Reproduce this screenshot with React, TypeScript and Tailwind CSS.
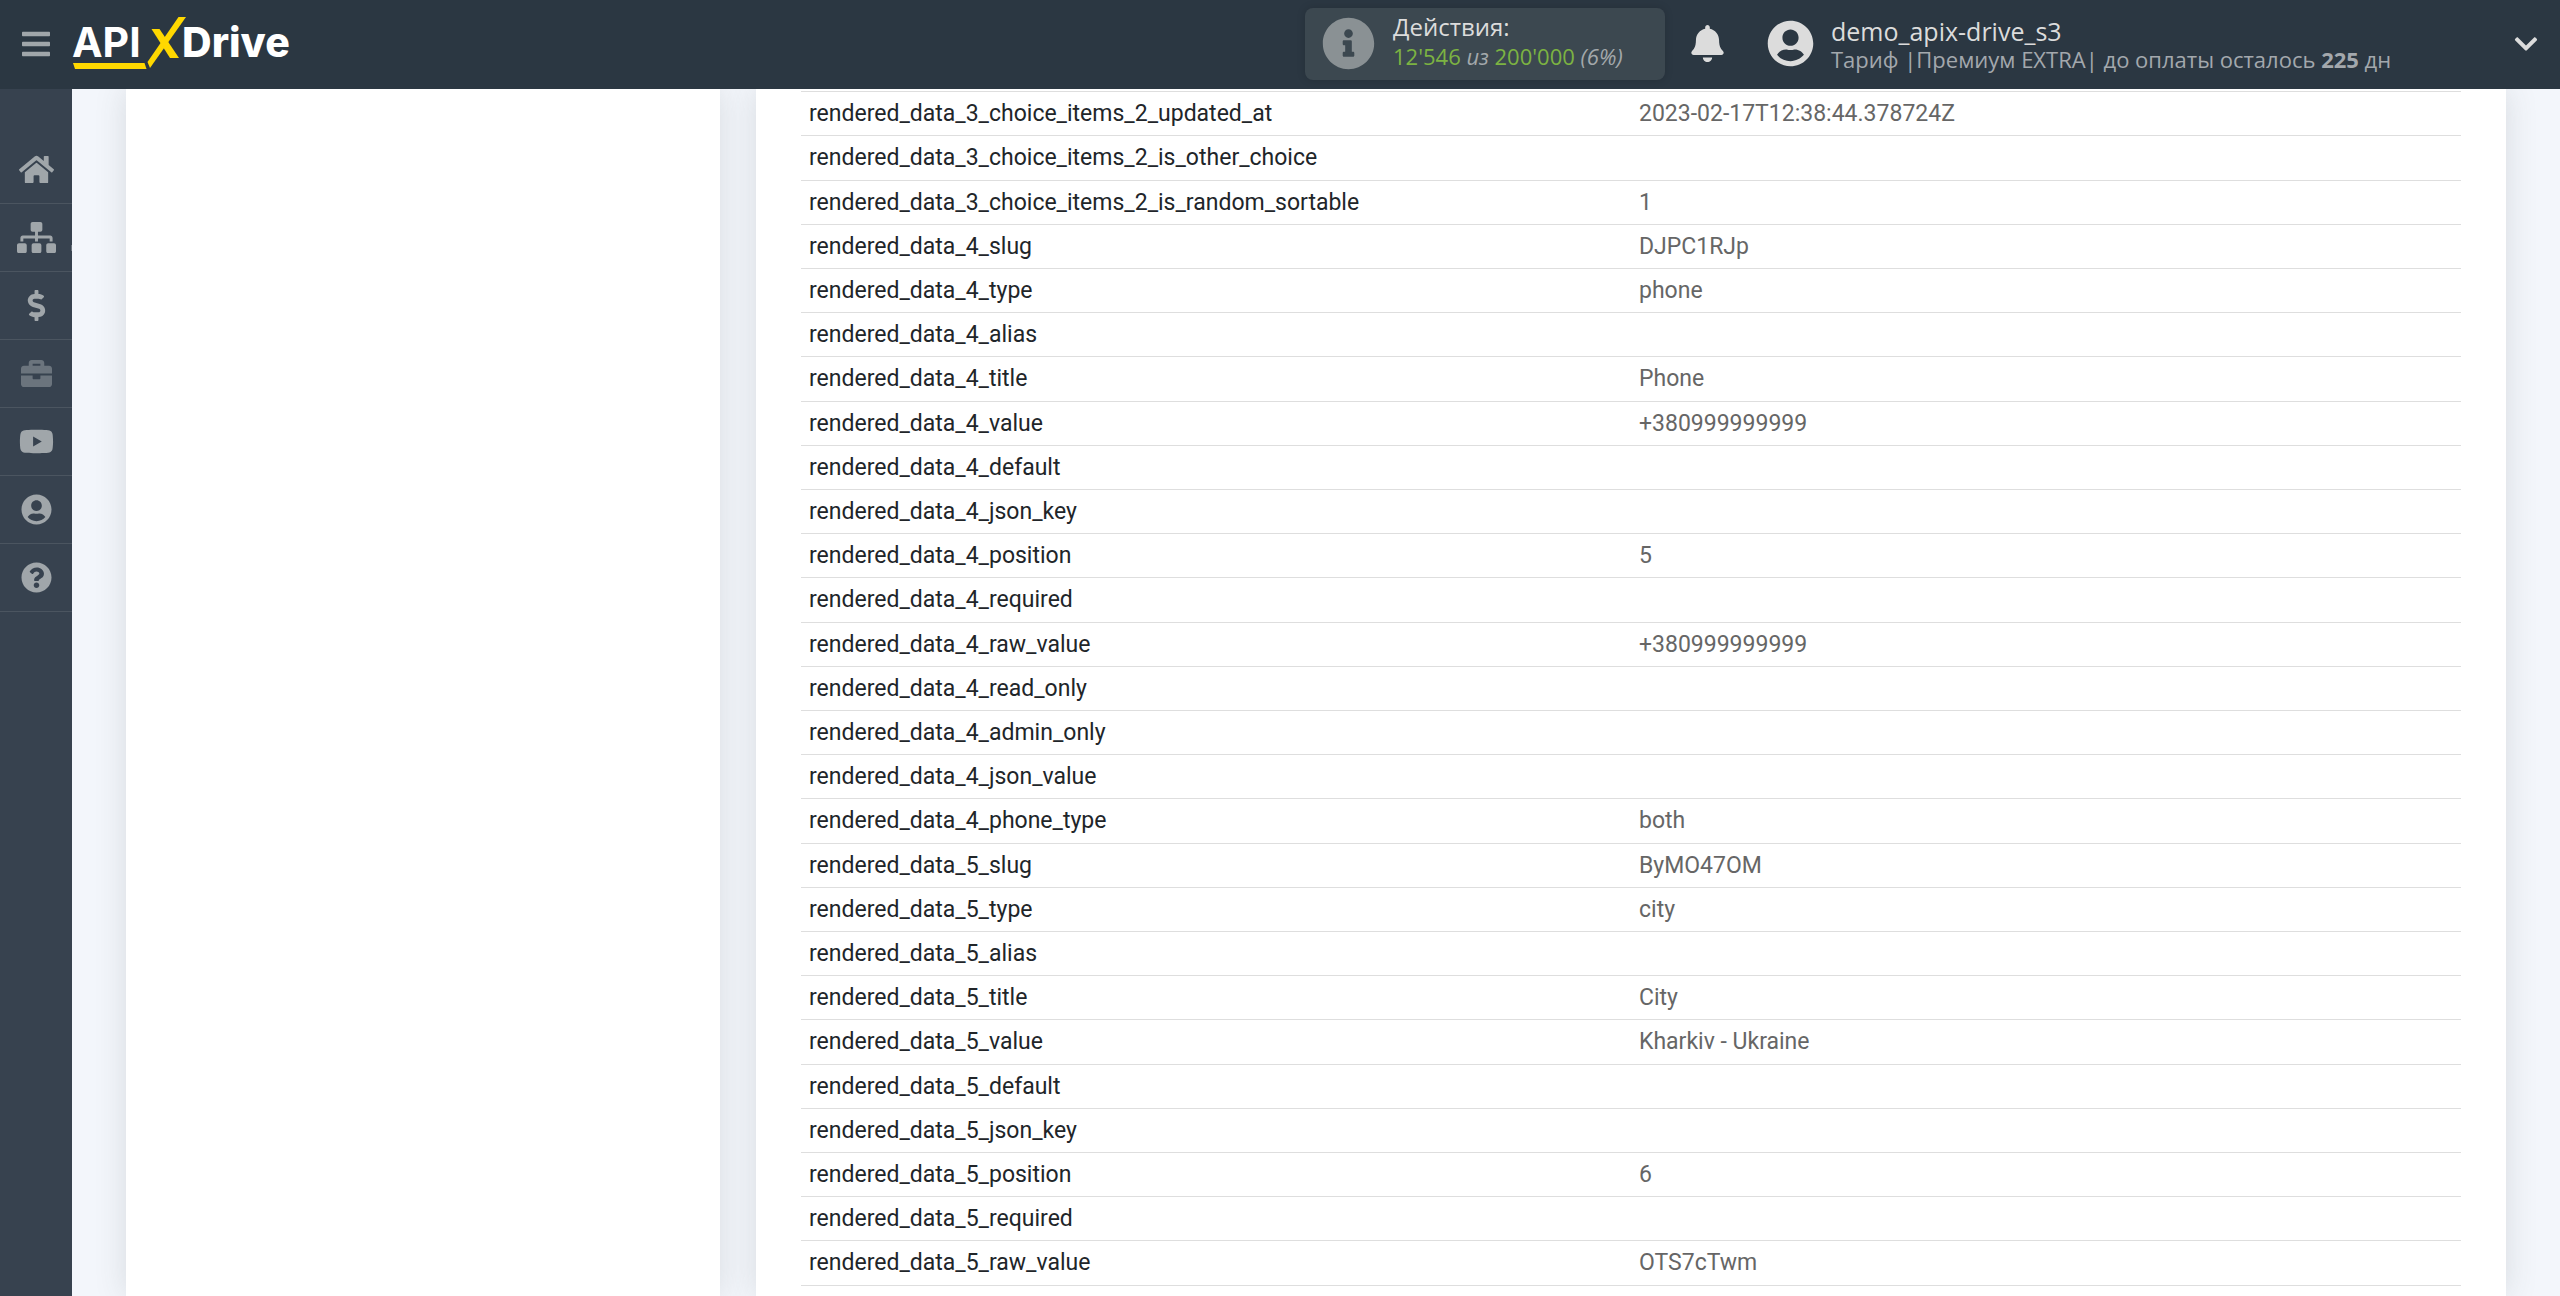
import type { IconType } from "react-icons";
import {
  FaBars,
  FaBell,
  FaBriefcase,
  FaChevronDown,
  FaDollarSign,
  FaHome,
  FaInfoCircle,
  FaQuestionCircle,
  FaSitemap,
  FaUserCircle,
  FaYoutube,
} from "react-icons/fa";

type Row = { name: string; value?: string };

const rows: Row[] = [
  { name: "rendered_data_3_choice_items_2_updated_at", value: "2023-02-17T12:38:44.378724Z" },
  { name: "rendered_data_3_choice_items_2_is_other_choice" },
  { name: "rendered_data_3_choice_items_2_is_random_sortable", value: "1" },
  { name: "rendered_data_4_slug", value: "DJPC1RJp" },
  { name: "rendered_data_4_type", value: "phone" },
  { name: "rendered_data_4_alias" },
  { name: "rendered_data_4_title", value: "Phone" },
  { name: "rendered_data_4_value", value: "+380999999999" },
  { name: "rendered_data_4_default" },
  { name: "rendered_data_4_json_key" },
  { name: "rendered_data_4_position", value: "5" },
  { name: "rendered_data_4_required" },
  { name: "rendered_data_4_raw_value", value: "+380999999999" },
  { name: "rendered_data_4_read_only" },
  { name: "rendered_data_4_admin_only" },
  { name: "rendered_data_4_json_value" },
  { name: "rendered_data_4_phone_type", value: "both" },
  { name: "rendered_data_5_slug", value: "ByMO47OM" },
  { name: "rendered_data_5_type", value: "city" },
  { name: "rendered_data_5_alias" },
  { name: "rendered_data_5_title", value: "City" },
  { name: "rendered_data_5_value", value: "Kharkiv - Ukraine" },
  { name: "rendered_data_5_default" },
  { name: "rendered_data_5_json_key" },
  { name: "rendered_data_5_position", value: "6" },
  { name: "rendered_data_5_required" },
  { name: "rendered_data_5_raw_value", value: "OTS7cTwm" },
];

type NavItem = {
  label: string;
  icon: IconType;
  size: number;
  muted?: boolean;
  submenu?: boolean;
};

const nav: NavItem[] = [
  { label: "Главная", icon: FaHome, size: 35 },
  { label: "Связи", icon: FaSitemap, size: 39, submenu: true },
  { label: "Оплата", icon: FaDollarSign, size: 31 },
  { label: "Проекты", icon: FaBriefcase, size: 31, muted: true },
  { label: "Видео", icon: FaYoutube, size: 35 },
  { label: "Профиль", icon: FaUserCircle, size: 31 },
  { label: "Помощь", icon: FaQuestionCircle, size: 31 },
];

export default function App() {
  return (
    <div className="flex min-h-screen flex-col bg-[#f3f6fb] font-['Open_Sans','Noto_Sans',sans-serif]">
      <Header />
      <div className="flex flex-1">
        <Sidebar />
        <main className="grid flex-1 grid-cols-[594fr_1750fr] gap-9 overflow-hidden px-[54px]">
          <section className="bg-white shadow-[0_0_30px_rgba(60,65,70,0.15)]" />
          <section className="bg-white px-[45px] pt-0.5 pb-2.5 shadow-[0_0_30px_rgba(60,65,70,0.15)]">
            <DataTable />
          </section>
        </main>
      </div>
    </div>
  );
}

function Header() {
  return (
    <header className="z-10 flex h-[89px] items-center bg-[#2b3742] pb-0.5 text-[#dcdcdc]">
      <button type="button" aria-label="Меню" className="flex w-[72px] justify-center text-[#a0a6aa]">
        <FaBars size={32} />
      </button>
      <a href="#" aria-label="APIXDrive" className="flex">
        <Logo />
      </a>

      <div className="ml-auto flex h-18 w-[360px] items-center rounded-lg bg-[#3c4850] pl-[17px] shadow-[0_0_8px_rgba(0,0,0,0.15)]">
        <FaInfoCircle size={53} className="text-[#8a9194]" />
        <div className="ml-[18px] pb-[3px]">
          <div className="text-2xl leading-7">Действия:</div>
          <div className="text-[22px] leading-[30px] text-[#7cb342]">
            12'546 <i className="text-[#a3a8ab]">из</i> 200'000{" "}
            <i className="text-[#a3a8ab]">(6%)</i>
          </div>
        </div>
      </div>

      <button type="button" aria-label="Уведомления" className="ml-6">
        <FaBell size={37} />
      </button>

      <button type="button" className="ml-[41px] flex w-[793px] items-center pr-[21px] text-left">
        <FaUserCircle size={47} />
        <span className="ml-[17px] flex-1 pt-0.5">
          <span className="block text-[25px] leading-7">demo_apix-drive_s3</span>
          <span className="block text-[22px] leading-7 text-[#a3a8ad]">
            Тариф |Премиум EXTRA| до оплаты осталось <b>225</b> дн
          </span>
        </span>
        <FaChevronDown size={26} />
      </button>
    </header>
  );
}

function Logo() {
  return (
    <svg width="224" height="56" viewBox="72 15 224 56">
      <g fill="#fff" fontFamily="Inter, sans-serif" fontSize="41">
        <text x="72" y="56" fontWeight="700">API</text>
        <text x="182" y="56" fontWeight="800">Drive</text>
      </g>
      <g fill="#ffd800">
        <path d="M73 62h71.500l2 6H75z" />
        <path d="M178.500 16H186L150 67l-2.500-6z" />
        <path d="M151.500 28h8l19.500 29h-9z" />
      </g>
    </svg>
  );
}

function Sidebar() {
  return (
    <nav className="w-[72px] shrink-0 bg-[#37424f] pt-[47px]">
      {nav.map(({ label, icon: Icon, size, muted, submenu }) => (
        <a
          key={label}
          href="#"
          aria-label={label}
          className={`relative flex h-[68px] items-center justify-center border-b border-[#4b5560] ${
            muted ? "text-[#6b747d]" : "text-[#a0a6aa]"
          }`}
        >
          <Icon size={size} />
          {submenu && <span className="absolute right-0 bottom-5 h-1.5 w-px bg-[#6b747d]" />}
        </a>
      ))}
    </nav>
  );
}

function DataTable() {
  return (
    <table className="w-full table-fixed border-collapse border-t border-[#dedede] font-[Roboto,sans-serif] text-[23px] leading-8">
      <tbody>
        {rows.map((row) => (
          <tr key={row.name} className="h-11 border-b border-[#dedede] nth-[5n+2]:h-[45px]">
            <th scope="row" className="px-2 text-left font-normal text-[#212529]">
              {row.name}
            </th>
            <td className="px-2 text-[#666]">{row.value}</td>
          </tr>
        ))}
      </tbody>
    </table>
  );
}
